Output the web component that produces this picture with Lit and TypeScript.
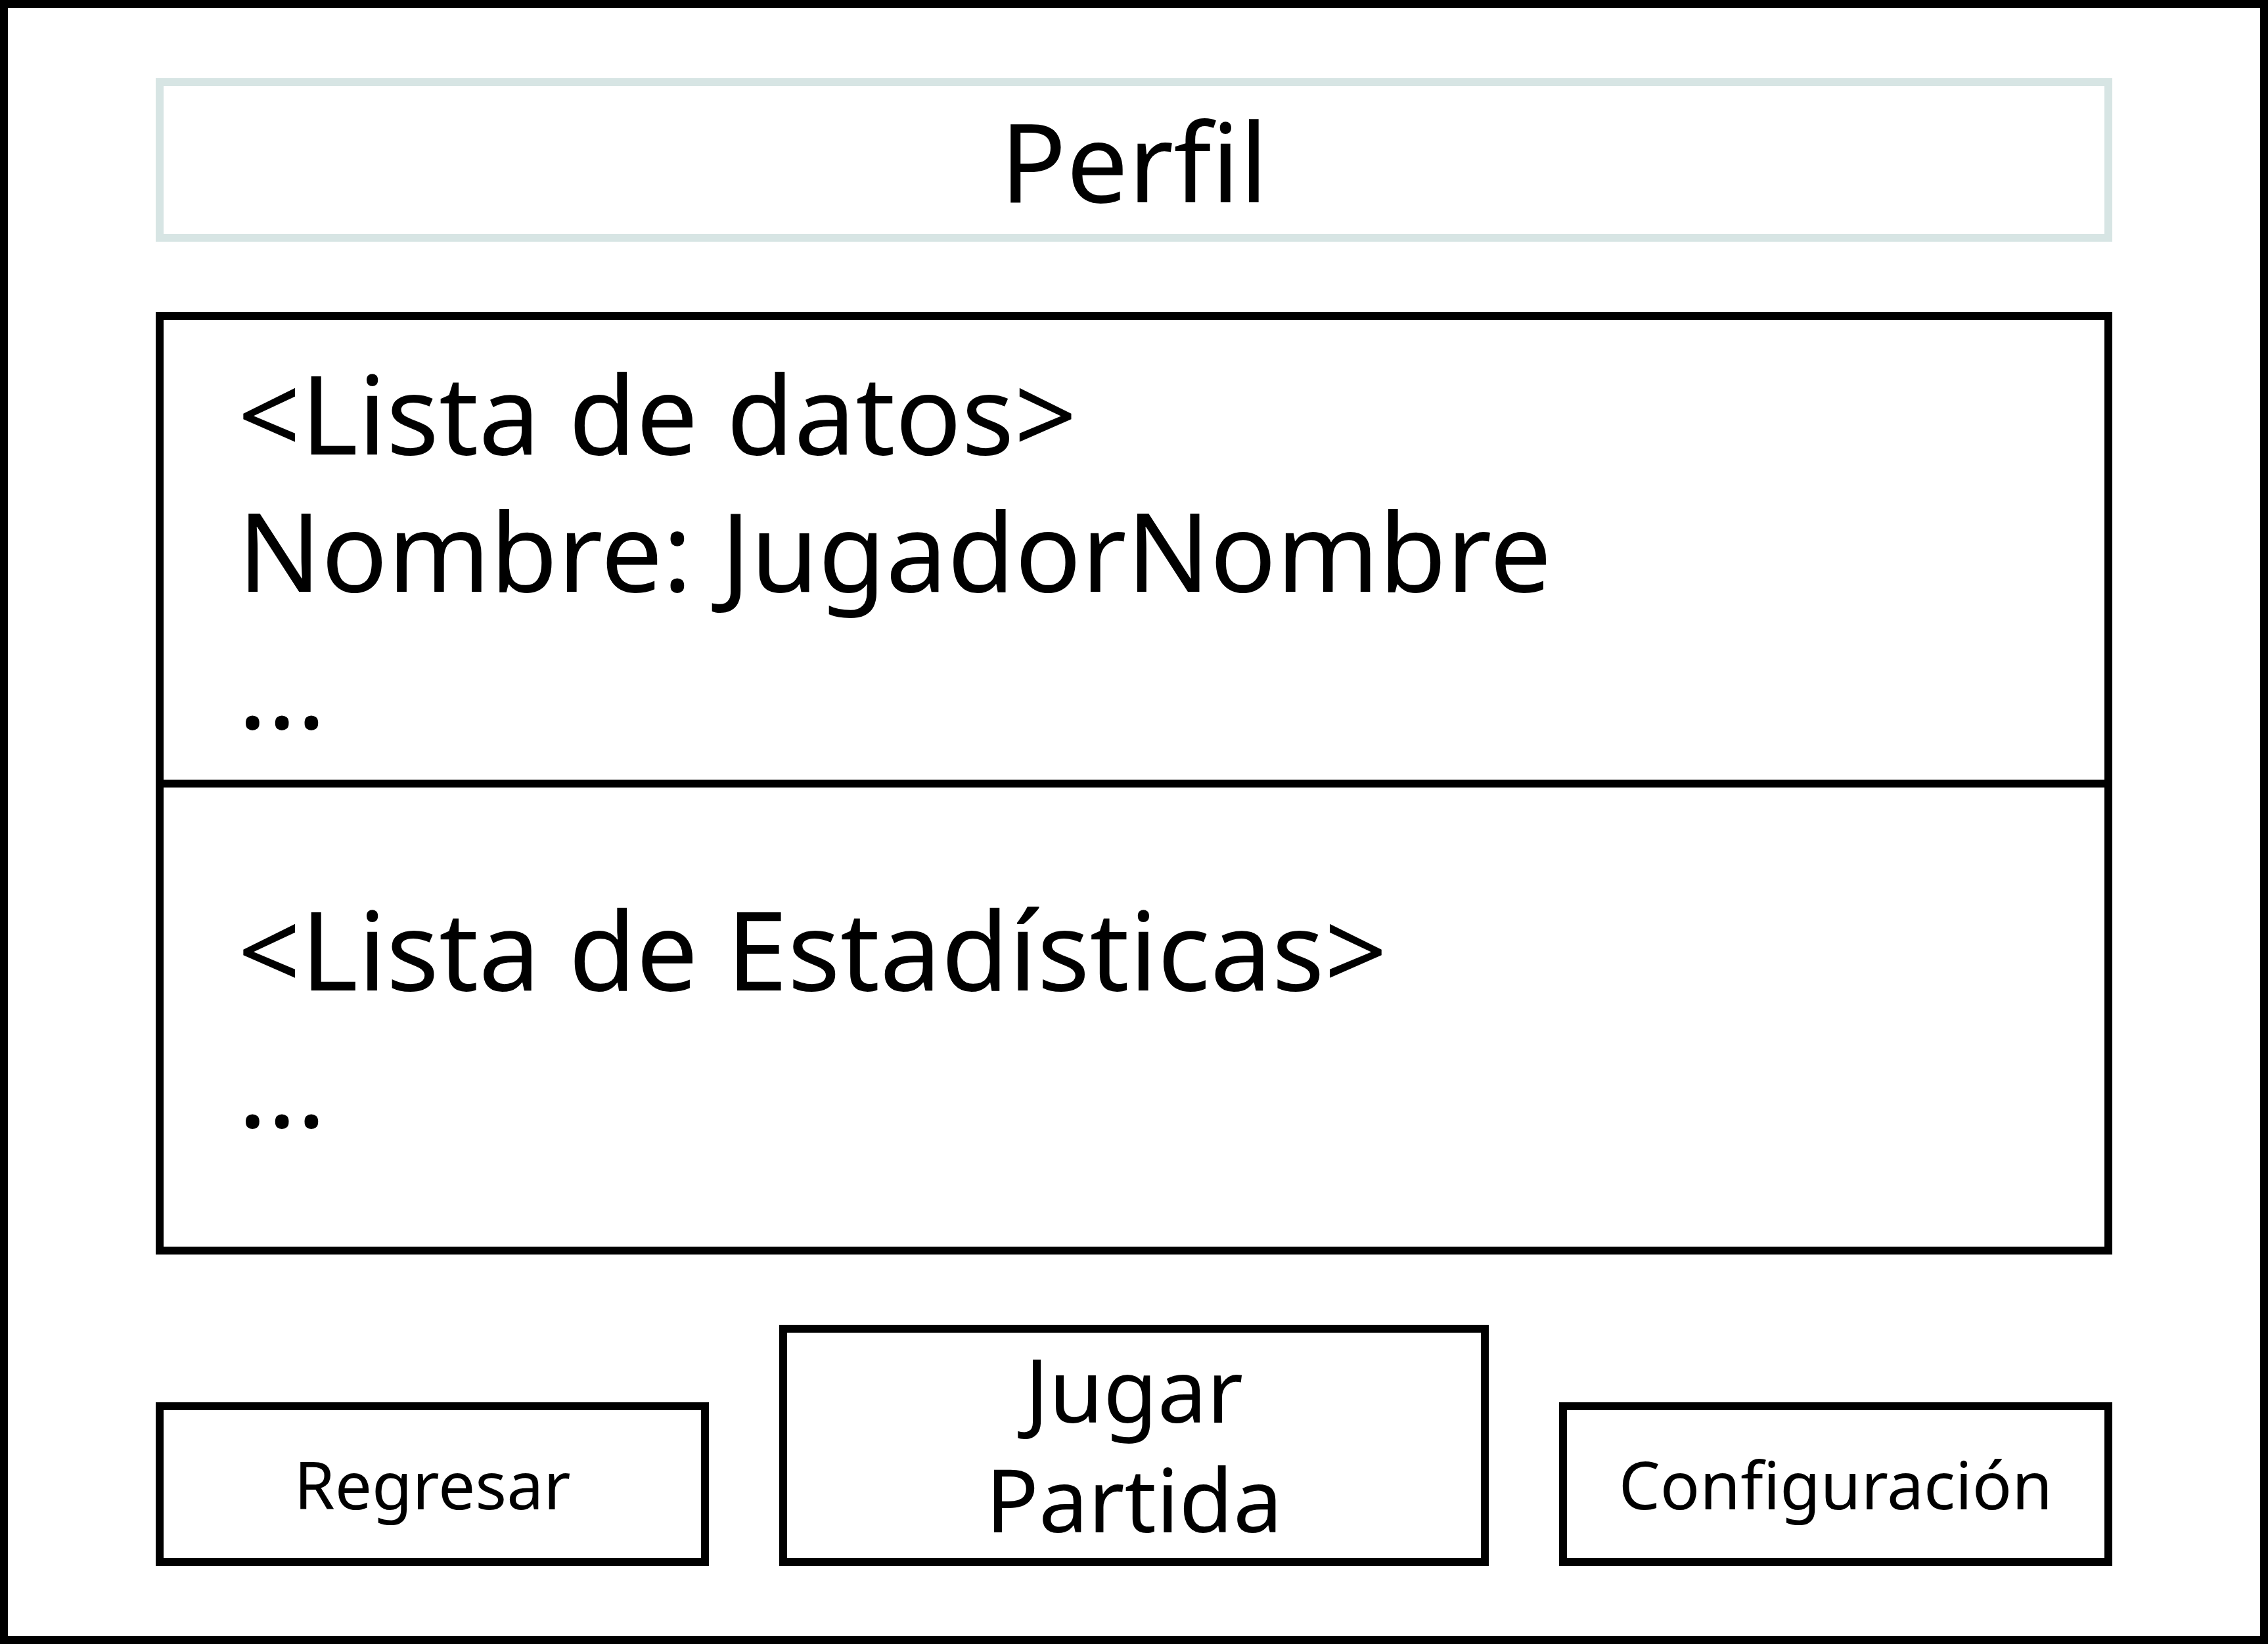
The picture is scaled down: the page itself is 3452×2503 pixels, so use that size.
import { LitElement, html, css } from "lit";
import { customElement } from "lit/decorators.js";

@customElement("app-root")
export class AppRoot extends LitElement {
  static styles = css`
    :host {
      display: block;
      font-family: "Noto Sans", sans-serif;
      color: #000;
      background: #fff;
    }

    .screen {
      box-sizing: border-box;
      min-height: 100vh;
      display: flex;
      flex-direction: column;
      gap: 107px;
      padding: 107px 225px;
      border: 12px solid #000;
    }

    .title {
      margin: 0;
      padding: 8px 0;
      border: 12px solid #d7e5e4;
      font-size: 167px;
      font-weight: 400;
      line-height: 209px;
      text-align: center;
    }

    .panel {
      flex: 1;
      display: grid;
      grid-template-rows: 1fr 1fr;
      gap: 12px;
      border: 12px solid #000;
      background: #000;
    }

    .section {
      display: flex;
      flex-direction: column;
      justify-content: center;
      padding: 0 113px;
      background: #fff;
      font-size: 167px;
      line-height: 209px;
    }

    .section h2,
    .section p {
      margin: 0;
      font-size: inherit;
      font-weight: 400;
    }

    .actions {
      display: grid;
      grid-template-columns: 39fr 50fr 39fr;
      align-items: end;
      gap: 107px;
    }

    .button {
      box-sizing: border-box;
      margin: 0;
      border: 12px solid #000;
      border-radius: 0;
      background: #fff;
      color: inherit;
      font-family: inherit;
      font-size: 100px;
      line-height: 125px;
      padding: 50px 0;
      text-align: center;
      cursor: pointer;
    }

    .primary {
      font-size: 134px;
      line-height: 167px;
      padding: 2px 200px 7px;
    }
  `;

  render() {
    return html`
      <main class="screen">
        <h1 class="title">Perfil</h1>
        <div class="panel">
          <section class="section">
            <h2>&lt;Lista de datos&gt;</h2>
            <p>Nombre: JugadorNombre</p>
            <p>...</p>
          </section>
          <section class="section">
            <h2>&lt;Lista de Estadísticas&gt;</h2>
            <p>...</p>
          </section>
        </div>
        <nav class="actions">
          <button class="button" type="button">Regresar</button>
          <button class="button primary" type="button">Jugar Partida</button>
          <button class="button" type="button">Configuración</button>
        </nav>
      </main>
    `;
  }
}
